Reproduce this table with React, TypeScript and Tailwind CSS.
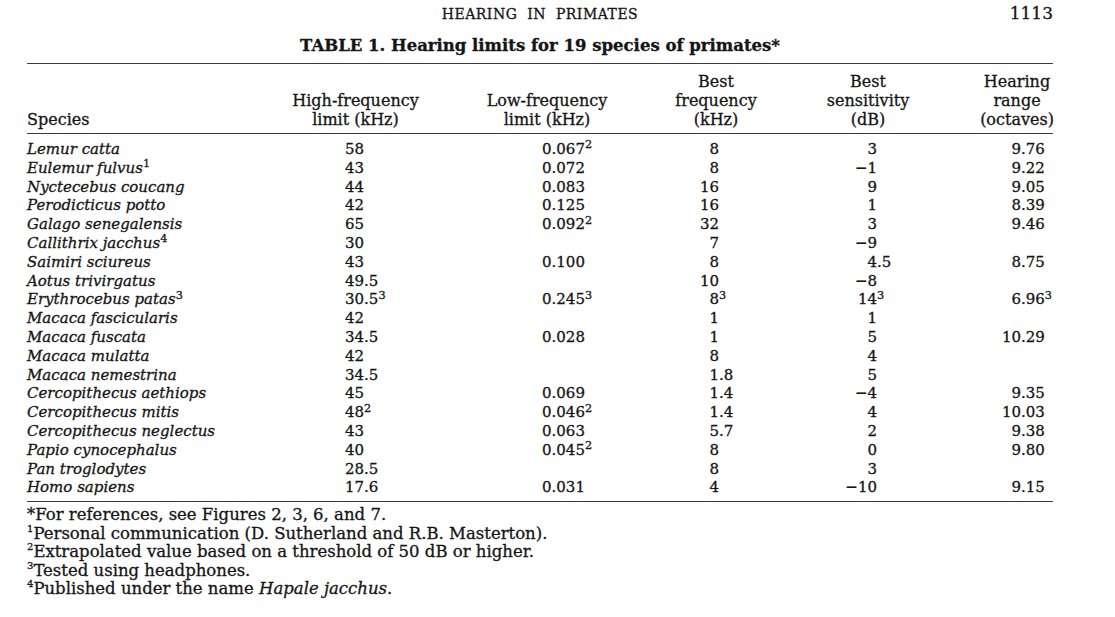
import React from "react";

type Row = {
  species: string;
  speciesNote?: string;
  high: [string, string?];
  low?: [string, string?];
  best: [string, string?];
  sens: [string, string?];
  range?: [string, string?];
};

const rows: Row[] = [
  { species: "Lemur catta", high: ["58"], low: ["0.067", "2"], best: ["8"], sens: ["3"], range: ["9.76"] },
  { species: "Eulemur fulvus", speciesNote: "1", high: ["43"], low: ["0.072"], best: ["8"], sens: ["\u22121"], range: ["9.22"] },
  { species: "Nyctecebus coucang", high: ["44"], low: ["0.083"], best: ["16"], sens: ["9"], range: ["9.05"] },
  { species: "Perodicticus potto", high: ["42"], low: ["0.125"], best: ["16"], sens: ["1"], range: ["8.39"] },
  { species: "Galago senegalensis", high: ["65"], low: ["0.092", "2"], best: ["32"], sens: ["3"], range: ["9.46"] },
  { species: "Callithrix jacchus", speciesNote: "4", high: ["30"], best: ["7"], sens: ["\u22129"] },
  { species: "Saimiri sciureus", high: ["43"], low: ["0.100"], best: ["8"], sens: ["4.5"], range: ["8.75"] },
  { species: "Aotus trivirgatus", high: ["49.5"], best: ["10"], sens: ["\u22128"] },
  { species: "Erythrocebus patas", speciesNote: "3", high: ["30.5", "3"], low: ["0.245", "3"], best: ["8", "3"], sens: ["14", "3"], range: ["6.96", "3"] },
  { species: "Macaca fascicularis", high: ["42"], best: ["1"], sens: ["1"] },
  { species: "Macaca fuscata", high: ["34.5"], low: ["0.028"], best: ["1"], sens: ["5"], range: ["10.29"] },
  { species: "Macaca mulatta", high: ["42"], best: ["8"], sens: ["4"] },
  { species: "Macaca nemestrina", high: ["34.5"], best: ["1.8"], sens: ["5"] },
  { species: "Cercopithecus aethiops", high: ["45"], low: ["0.069"], best: ["1.4"], sens: ["\u22124"], range: ["9.35"] },
  { species: "Cercopithecus mitis", high: ["48", "2"], low: ["0.046", "2"], best: ["1.4"], sens: ["4"], range: ["10.03"] },
  { species: "Cercopithecus neglectus", high: ["43"], low: ["0.063"], best: ["5.7"], sens: ["2"], range: ["9.38"] },
  { species: "Papio cynocephalus", high: ["40"], low: ["0.045", "2"], best: ["8"], sens: ["0"], range: ["9.80"] },
  { species: "Pan troglodytes", high: ["28.5"], best: ["8"], sens: ["3"] },
  { species: "Homo sapiens", high: ["17.6"], low: ["0.031"], best: ["4"], sens: ["\u221210"], range: ["9.15"] },
];

// integer part right-aligned in a fixed box, fraction + note after it
function Dec({ v, intBox }: { v?: [string, string?]; intBox: string }) {
  if (!v) return null;
  const [num, note] = v;
  const dot = num.indexOf(".");
  const whole = dot < 0 ? num : num.slice(0, dot);
  const frac = dot < 0 ? "" : num.slice(dot);
  return (
    <span className="flex whitespace-nowrap">
      <span className={`${intBox} shrink-0 text-right`}>{whole}</span>
      <span>
        {frac}
        {note && <sup>{note}</sup>}
      </span>
    </span>
  );
}

function Plain({ v }: { v?: [string, string?] }) {
  if (!v) return null;
  return (
    <span className="whitespace-nowrap">
      {v[0]}
      {v[1] && <sup>{v[1]}</sup>}
    </span>
  );
}

const cols = "grid grid-cols-[264px_179px_154px_184px_120px_125px]";
const note = "text-[10px] top-[-0.7em]";

export default function App() {
  return (
    <div
      className="w-[1115px] h-[617px] bg-white text-[#151515] overflow-hidden [-webkit-text-stroke:0.3px]"
      style={{ fontFamily: '"DejaVu Serif", "Liberation Serif", serif' }}
    >
      <div className="ml-[27px] w-[1026px]">
        <div className="relative h-[24px] flex items-end justify-center">
          <span className="text-[14px] tracking-[0.5px] leading-[20px]">HEARING&nbsp; IN&nbsp; PRIMATES</span>
          <span className="absolute right-0 bottom-0 text-[17px] leading-[22px]">1113</span>
        </div>
        <div className="text-center font-bold text-[16.5px] leading-[22px] mt-[11px]">
          TABLE 1. Hearing limits for 19 species of primates*
        </div>
        <div className="mt-[6px] border-t border-[#3a3a3a]" />

        <div className={`${cols} text-[16px] leading-[19px] pt-[8px] pb-[4px] border-b border-[#3a3a3a]`}>
          <div className="flex items-end">Species</div>
          <div className="flex flex-col items-center justify-end pr-[50px]">
            <span>High-frequency</span>
            <span>limit (kHz)</span>
          </div>
          <div className="flex flex-col items-center justify-end">
            <span>Low-frequency</span>
            <span>limit (kHz)</span>
          </div>
          <div className="flex flex-col items-center justify-end">
            <span>Best</span>
            <span>frequency</span>
            <span>(kHz)</span>
          </div>
          <div className="flex flex-col items-center justify-end">
            <span>Best</span>
            <span>sensitivity</span>
            <span>(dB)</span>
          </div>
          <div className="flex flex-col items-center justify-end pl-[53px]">
            <span>Hearing</span>
            <span>range</span>
            <span>(octaves)</span>
          </div>
        </div>

        <div className="pt-[6px] pb-[4px] border-b border-[#3a3a3a] text-[15px] leading-[18.8px]">
          {rows.map((r) => (
            <div key={r.species} className={cols}>
              <div className="italic whitespace-nowrap">
                {r.species}
                {r.speciesNote && <sup className="not-italic">{r.speciesNote}</sup>}
              </div>
              <div className="pl-[54px]">
                <Plain v={r.high} />
              </div>
              <div className="pl-[72px]">
                <Plain v={r.low} />
              </div>
              <div>
                <Dec v={r.best} intBox="w-[95px]" />
              </div>
              <div>
                <Dec v={r.sens} intBox="w-[69px]" />
              </div>
              <div>
                <Dec v={r.range} intBox="w-[93px]" />
              </div>
            </div>
          ))}
        </div>

        <div className="pt-[4px] text-[16.5px] leading-[18.5px]">
          <p>*For references, see Figures 2, 3, 6, and 7.</p>
          <p>
            <sup className={note}>1</sup>Personal communication (D. Sutherland and R.B. Masterton).
          </p>
          <p>
            <sup className={note}>2</sup>Extrapolated value based on a threshold of 50 dB or higher.
          </p>
          <p>
            <sup className={note}>3</sup>Tested using headphones.
          </p>
          <p>
            <sup className={note}>4</sup>Published under the name <i>Hapale jacchus</i>.
          </p>
        </div>
      </div>
    </div>
  );
}
